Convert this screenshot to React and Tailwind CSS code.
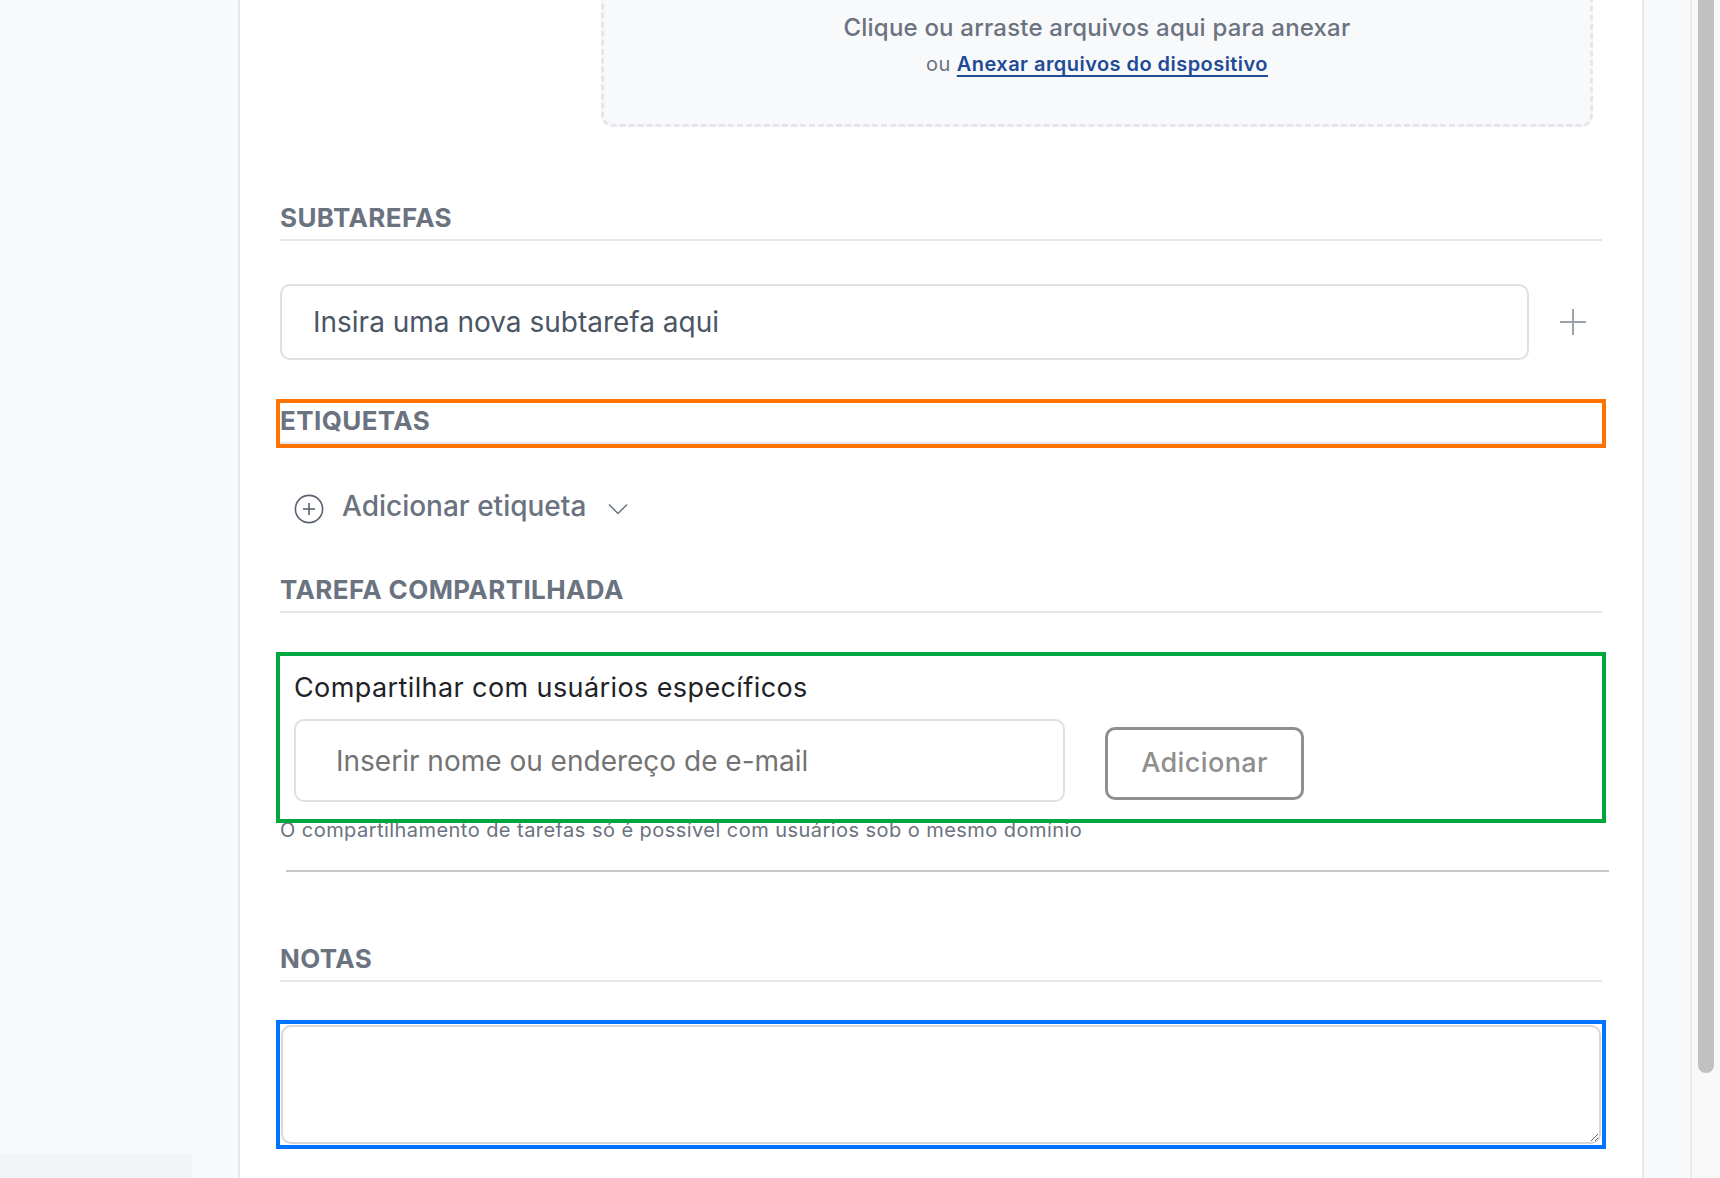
function SectionTitle({ children, extra = "" }) {
  return (
    <h2
      className={`border-b-2 border-[#e5e7eb] pb-[4px] text-[26px] leading-[35px] font-bold tracking-[0.4px] text-[#6b7280] ${extra}`}
    >
      {children}
    </h2>
  );
}

function PlusIcon() {
  return (
    <svg width="28" height="28" viewBox="0 0 28 28" fill="none" stroke="#9ca3af" strokeWidth="2">
      <line x1="14" y1="1" x2="14" y2="27" />
      <line x1="1" y1="14" x2="27" y2="14" />
    </svg>
  );
}

function CirclePlusIcon() {
  return (
    <svg width="30" height="30" viewBox="0 0 30 30" fill="none" stroke="#5b6270" strokeWidth="1.6">
      <circle cx="15" cy="15" r="13.6" />
      <line x1="15" y1="9" x2="15" y2="21" />
      <line x1="9" y1="15" x2="21" y2="15" />
    </svg>
  );
}

function ChevronIcon() {
  return (
    <svg width="20" height="12" viewBox="0 0 20 12" fill="none" stroke="#6b7280" strokeWidth="1.5">
      <polyline points="1,1.5 10,10.5 19,1.5" />
    </svg>
  );
}

export default function App() {
  return (
    <div className="flex h-[1178px] w-[1720px] overflow-hidden bg-white font-['Inter','Liberation_Sans',sans-serif]">
      {/* side navigation column */}
      <aside className="flex w-[240px] shrink-0 flex-col justify-end border-r-2 border-[#e5e7eb] bg-[#f8f9fb]">
        <div className="h-[24px] w-[192px] bg-[#f2f3f5]" />
      </aside>

      {/* task details panel */}
      <main className="w-[1404px] shrink-0 border-r-2 border-[#e5e7eb] bg-white px-[40px]">
        {/* attachment drop zone */}
        <div className="-mt-[40px] mr-[9px] ml-[321px] h-[167px] rounded-[12px] border-[3px] border-dashed border-[#e5e7eb] bg-[#f8f9fb] pt-[50px] text-center">
          <p className="text-[24px] leading-[30px] font-medium tracking-[0.2px] text-[#6b7280]">
            Clique ou arraste arquivos aqui para anexar
          </p>
          <p className="mt-[7px] text-[20px] leading-[28px] tracking-[0.45px] text-[#6b7280]">
            ou{" "}
            <a
              href="#"
              className="font-semibold text-[#1e4a96] underline decoration-2 underline-offset-[4px]"
            >
              Anexar arquivos do dispositivo
            </a>
          </p>
        </div>

        <SectionTitle extra="mt-[73px]">SUBTAREFAS</SectionTitle>

        <div className="mt-[43px] flex items-center">
          <input
            className="h-[76px] flex-1 rounded-[10px] border-2 border-[#dde0e4] pl-[31px] text-[28px] text-[#374151] outline-none placeholder:text-[#4b5563]"
            placeholder="Insira uma nova subtarefa aqui"
          />
          <div className="flex w-[73px] shrink-0 pl-[30px]">
            <PlusIcon />
          </div>
        </div>

        <SectionTitle extra="mt-[43px] outline-4 outline-[#ff7300]">ETIQUETAS</SectionTitle>

        <div className="mt-[45px] flex h-[40px] items-center pl-[14px]">
          <CirclePlusIcon />
          <span className="ml-[18px] pb-[6px] text-[28px] leading-[35px] font-medium text-[#6b7280]">
            Adicionar etiqueta
          </span>
          <span className="ml-[22px] flex">
            <ChevronIcon />
          </span>
        </div>

        <SectionTitle extra="mt-[43px]">TAREFA COMPARTILHADA</SectionTitle>

        <div className="mt-[43px] px-[14px] pt-[14px] pb-[17px] outline-4 outline-[#00a63e]">
          <p className="text-[27px] leading-[35px] tracking-[0.4px] text-[#1f2328]">
            Compartilhar com usuários específicos
          </p>
          <div className="mt-[14px] flex items-start">
            <input
              className="h-[83px] w-[771px] rounded-[10px] border-2 border-[#dde0e4] pl-[40px] text-[28px] outline-none placeholder:text-[#737373]"
              placeholder="Inserir nome ou endereço de e-mail"
            />
            <button className="mt-[8px] ml-[40px] h-[73px] w-[199px] rounded-[10px] border-[3px] border-[#8f8f8f] text-[27px] font-medium tracking-[0.4px] text-[#8f8f8f]">
              Adicionar
            </button>
          </div>
        </div>
        <p className="text-[20px] leading-[23px] tracking-[0.45px] text-[#6b7280]">
          O compartilhamento de tarefas só é possível com usuários sob o mesmo domínio
        </p>

        <div className="mt-[28px] -mr-[7px] ml-[6px] h-[2px] bg-[#c4c8cb]" />

        <SectionTitle extra="mt-[69px]">NOTAS</SectionTitle>

        <div className="mt-[42px] h-[121px] p-px outline-4 outline-[#0073ff]">
          <textarea className="block h-full w-full rounded-[10px] border-2 border-[#d5d8dc] outline-none" />
        </div>
      </main>

      {/* right gutter */}
      <div className="w-[46px] shrink-0 bg-[#f8f9fb]" />

      {/* scrollbar */}
      <div className="w-[30px] shrink-0 border-l-2 border-[#ebebeb] bg-[#f8f8f8] pl-[6px]">
        <div className="-mt-[10px] h-[1083px] w-[16px] rounded-[8px] bg-[#c1c1c1]" />
      </div>
    </div>
  );
}
